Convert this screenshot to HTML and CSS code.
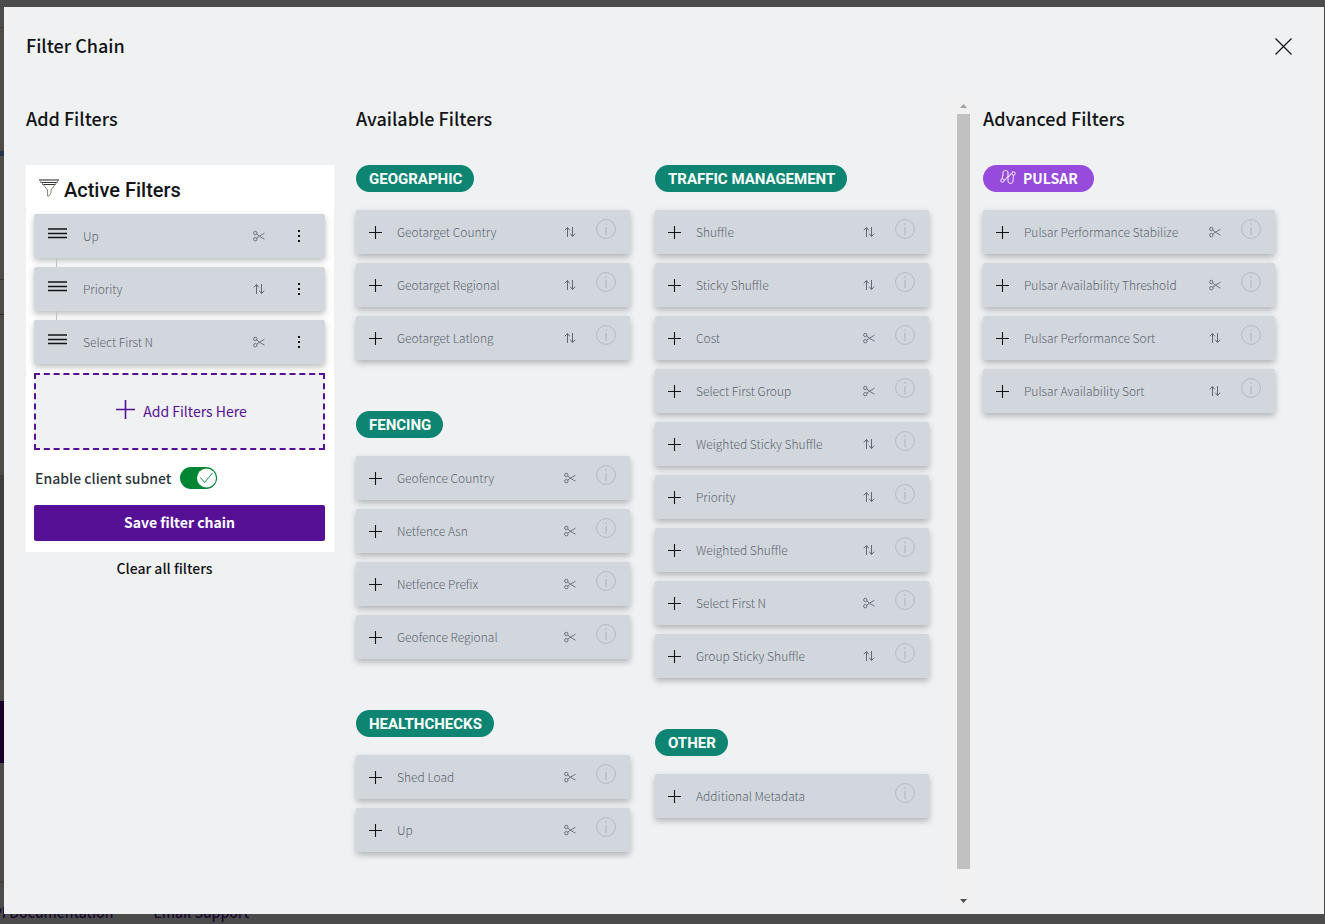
FILE: index.html
```html
<!DOCTYPE html>
<html lang="en">
<head>
<meta charset="utf-8">
<title>Filter Chain</title>
<link rel="stylesheet" href="styles.css">
</head>
<body>
<svg class="sprite" aria-hidden="true">
  <symbol id="plus" viewBox="0 0 13 13"><path d="M6.500 0v13M0 6.500h13" fill="none" stroke="currentColor" stroke-width="1.100"/></symbol>
  <symbol id="sort" viewBox="0 0 12 12"><path d="M3.500 11V1.600M.8 4.300l2.700-2.800 2.200 2.800M8.500 1v9.400M6.300 7.700l2.200 2.800 2.700-2.800" fill="none" stroke="currentColor" stroke-width="1"/></symbol>
  <symbol id="cut" viewBox="0 0 12 12"><g fill="none" stroke="currentColor" stroke-width=".9"><circle cx="2.300" cy="3" r="1.700"/><circle cx="2.300" cy="9.200" r="1.700"/><path d="M3.800 4 6.400 6.200 11.500 9.200M3.800 8.200 6.400 6.200 11.500 3.200"/></g></symbol>
  <symbol id="info" viewBox="0 0 20 20"><g fill="none" stroke="currentColor"><circle cx="10" cy="10" r="9.400"/><path d="M10 8v8M10 4.300v1.700" stroke-width="1.300"/></g></symbol>
  <symbol id="bars" viewBox="0 0 19 11"><path d="M0 1h19M0 5.500h19M0 9.500h19" fill="none" stroke="currentColor" stroke-width="1.300"/></symbol>
  <symbol id="dots" viewBox="0 0 4 14"><path d="M1 1h2v2H1zM1 6h2v2H1zM1 11h2v2H1z" fill="currentColor"/></symbol>
</svg>

<div class="page" aria-hidden="true">
  <div class="page-edge"></div>
  <div class="page-footer"><span>API Documentation</span><span>Email Support</span></div>
</div>

<main class="modal" role="dialog" aria-labelledby="title">
  <header class="modal-head">
    <h1 id="title">Filter Chain</h1>
    <button class="close" aria-label="Close"><svg viewBox="0 0 17 17"><path d="M.5.500l16 16M16.500.500l-16 16" fill="none" stroke="currentColor" stroke-width="1.200"/></svg></button>
  </header>

  <div class="columns">
    <section class="add-filters">
      <h2>Add Filters</h2>
      <div class="panel">
        <h3 class="panel-title"><svg viewBox="0 0 20 18"><g fill="none" stroke="currentColor"><path d="M0 1h20" stroke-width="1.100"/><path d="M1.500 3.500h17M3.500 5.500h13"/><path d="M1 1.500 8.500 11v6h1.500l2-3v-3L19 1.500" stroke="#8b7468" stroke-width=".9"/></g></svg>Active Filters</h3>
        <ul class="cards active">
          <li class="card"><button class="drag" aria-label="Move Up"><svg><use href="#bars"/></svg></button><span class="name">Up</span><svg class="kind"><use href="#cut"/></svg><button class="more" aria-label="Up options"><svg><use href="#dots"/></svg></button></li>
          <li class="card"><button class="drag" aria-label="Move Priority"><svg><use href="#bars"/></svg></button><span class="name">Priority</span><svg class="kind"><use href="#sort"/></svg><button class="more" aria-label="Priority options"><svg><use href="#dots"/></svg></button></li>
          <li class="card"><button class="drag" aria-label="Move Select First N"><svg><use href="#bars"/></svg></button><span class="name">Select First N</span><svg class="kind"><use href="#cut"/></svg><button class="more" aria-label="Select First N options"><svg><use href="#dots"/></svg></button></li>
        </ul>
        <div class="drop"><svg><use href="#plus"/></svg><span>Add Filters Here</span></div>
        <div class="subnet"><label for="subnet">Enable client subnet</label>
          <span class="switch"><input id="subnet" type="checkbox" role="switch" checked><svg viewBox="0 0 37 22"><circle cx="26.500" cy="11" r="9.500" fill="#fff"/><path d="M20.500 10.500l4 5L32.500 6" fill="none" stroke="#008533" stroke-width=".9"/></svg></span>
        </div>
        <button class="save">Save filter chain</button>
      </div>
      <button class="clear">Clear all filters</button>
    </section>

    <section class="available">
      <div class="groups">
        <div class="group-col">
          <h2>Available Filters</h2>
          <div class="group">
            <h3 class="badge">GEOGRAPHIC</h3>
            <ul class="cards">
              <li class="card"><button class="add" aria-label="Add Geotarget Country"><svg><use href="#plus"/></svg></button><span class="name">Geotarget Country</span><svg class="kind"><use href="#sort"/></svg><button class="info" aria-label="About Geotarget Country"><svg><use href="#info"/></svg></button></li>
              <li class="card"><button class="add" aria-label="Add Geotarget Regional"><svg><use href="#plus"/></svg></button><span class="name">Geotarget Regional</span><svg class="kind"><use href="#sort"/></svg><button class="info" aria-label="About Geotarget Regional"><svg><use href="#info"/></svg></button></li>
              <li class="card"><button class="add" aria-label="Add Geotarget Latlong"><svg><use href="#plus"/></svg></button><span class="name">Geotarget Latlong</span><svg class="kind"><use href="#sort"/></svg><button class="info" aria-label="About Geotarget Latlong"><svg><use href="#info"/></svg></button></li>
            </ul>
          </div>
          <div class="group">
            <h3 class="badge">FENCING</h3>
            <ul class="cards">
              <li class="card"><button class="add" aria-label="Add Geofence Country"><svg><use href="#plus"/></svg></button><span class="name">Geofence Country</span><svg class="kind"><use href="#cut"/></svg><button class="info" aria-label="About Geofence Country"><svg><use href="#info"/></svg></button></li>
              <li class="card"><button class="add" aria-label="Add Netfence Asn"><svg><use href="#plus"/></svg></button><span class="name">Netfence Asn</span><svg class="kind"><use href="#cut"/></svg><button class="info" aria-label="About Netfence Asn"><svg><use href="#info"/></svg></button></li>
              <li class="card"><button class="add" aria-label="Add Netfence Prefix"><svg><use href="#plus"/></svg></button><span class="name">Netfence Prefix</span><svg class="kind"><use href="#cut"/></svg><button class="info" aria-label="About Netfence Prefix"><svg><use href="#info"/></svg></button></li>
              <li class="card"><button class="add" aria-label="Add Geofence Regional"><svg><use href="#plus"/></svg></button><span class="name">Geofence Regional</span><svg class="kind"><use href="#cut"/></svg><button class="info" aria-label="About Geofence Regional"><svg><use href="#info"/></svg></button></li>
            </ul>
          </div>
          <div class="group">
            <h3 class="badge">HEALTHCHECKS</h3>
            <ul class="cards">
              <li class="card"><button class="add" aria-label="Add Shed Load"><svg><use href="#plus"/></svg></button><span class="name">Shed Load</span><svg class="kind"><use href="#cut"/></svg><button class="info" aria-label="About Shed Load"><svg><use href="#info"/></svg></button></li>
              <li class="card"><button class="add" aria-label="Add Up"><svg><use href="#plus"/></svg></button><span class="name">Up</span><svg class="kind"><use href="#cut"/></svg><button class="info" aria-label="About Up"><svg><use href="#info"/></svg></button></li>
            </ul>
          </div>
        </div>
        <div class="group-col untitled">
          <div class="group">
            <h3 class="badge">TRAFFIC MANAGEMENT</h3>
            <ul class="cards">
              <li class="card"><button class="add" aria-label="Add Shuffle"><svg><use href="#plus"/></svg></button><span class="name">Shuffle</span><svg class="kind"><use href="#sort"/></svg><button class="info" aria-label="About Shuffle"><svg><use href="#info"/></svg></button></li>
              <li class="card"><button class="add" aria-label="Add Sticky Shuffle"><svg><use href="#plus"/></svg></button><span class="name">Sticky Shuffle</span><svg class="kind"><use href="#sort"/></svg><button class="info" aria-label="About Sticky Shuffle"><svg><use href="#info"/></svg></button></li>
              <li class="card"><button class="add" aria-label="Add Cost"><svg><use href="#plus"/></svg></button><span class="name">Cost</span><svg class="kind"><use href="#cut"/></svg><button class="info" aria-label="About Cost"><svg><use href="#info"/></svg></button></li>
              <li class="card"><button class="add" aria-label="Add Select First Group"><svg><use href="#plus"/></svg></button><span class="name">Select First Group</span><svg class="kind"><use href="#cut"/></svg><button class="info" aria-label="About Select First Group"><svg><use href="#info"/></svg></button></li>
              <li class="card"><button class="add" aria-label="Add Weighted Sticky Shuffle"><svg><use href="#plus"/></svg></button><span class="name">Weighted Sticky Shuffle</span><svg class="kind"><use href="#sort"/></svg><button class="info" aria-label="About Weighted Sticky Shuffle"><svg><use href="#info"/></svg></button></li>
              <li class="card"><button class="add" aria-label="Add Priority"><svg><use href="#plus"/></svg></button><span class="name">Priority</span><svg class="kind"><use href="#sort"/></svg><button class="info" aria-label="About Priority"><svg><use href="#info"/></svg></button></li>
              <li class="card"><button class="add" aria-label="Add Weighted Shuffle"><svg><use href="#plus"/></svg></button><span class="name">Weighted Shuffle</span><svg class="kind"><use href="#sort"/></svg><button class="info" aria-label="About Weighted Shuffle"><svg><use href="#info"/></svg></button></li>
              <li class="card"><button class="add" aria-label="Add Select First N"><svg><use href="#plus"/></svg></button><span class="name">Select First N</span><svg class="kind"><use href="#cut"/></svg><button class="info" aria-label="About Select First N"><svg><use href="#info"/></svg></button></li>
              <li class="card"><button class="add" aria-label="Add Group Sticky Shuffle"><svg><use href="#plus"/></svg></button><span class="name">Group Sticky Shuffle</span><svg class="kind"><use href="#sort"/></svg><button class="info" aria-label="About Group Sticky Shuffle"><svg><use href="#info"/></svg></button></li>
            </ul>
          </div>
          <div class="group">
            <h3 class="badge">OTHER</h3>
            <ul class="cards">
              <li class="card"><button class="add" aria-label="Add Additional Metadata"><svg><use href="#plus"/></svg></button><span class="name">Additional Metadata</span><button class="info" aria-label="About Additional Metadata"><svg><use href="#info"/></svg></button></li>
            </ul>
          </div>
        </div>
      </div>
      <div class="scrollbar">
        <button aria-label="Scroll up"><svg viewBox="0 0 7 4"><path d="M0 4 3.500 0 7 4z" fill="#a3a3a3"/></svg></button>
        <div class="track"><div class="thumb"></div></div>
        <button aria-label="Scroll down"><svg viewBox="0 0 7 4"><path d="M0 0h7L3.500 4z" fill="#505050"/></svg></button>
      </div>
    </section>

    <section class="advanced">
      <h2>Advanced Filters</h2>
      <div class="group">
        <h3 class="badge pulsar"><svg viewBox="0 0 16 14"><g fill="none" stroke="currentColor" stroke-width="1"><circle cx="2.400" cy="10.500" r="1.700"/><circle cx="13.500" cy="3.500" r="1.700"/><path d="M2.400 8.800V7.300C2.400 6.300 3 6 3 5V3C3 1.300 3.700.6 5.500.6S8 1.300 8 3v7.500c0 1.900.8 2.900 2.500 2.900s2.600-1 2.600-2.900V8.500c0-1 .5-1.300.5-3.300M4.100 10.500C6.500 10.500 5.500 7 8 6.800c2.500-.1 1.500-3.300 3.800-3.300"/></g></svg>PULSAR</h3>
        <ul class="cards">
          <li class="card"><button class="add" aria-label="Add Pulsar Performance Stabilize"><svg><use href="#plus"/></svg></button><span class="name">Pulsar Performance Stabilize</span><svg class="kind"><use href="#cut"/></svg><button class="info" aria-label="About Pulsar Performance Stabilize"><svg><use href="#info"/></svg></button></li>
          <li class="card"><button class="add" aria-label="Add Pulsar Availability Threshold"><svg><use href="#plus"/></svg></button><span class="name">Pulsar Availability Threshold</span><svg class="kind"><use href="#cut"/></svg><button class="info" aria-label="About Pulsar Availability Threshold"><svg><use href="#info"/></svg></button></li>
          <li class="card"><button class="add" aria-label="Add Pulsar Performance Sort"><svg><use href="#plus"/></svg></button><span class="name">Pulsar Performance Sort</span><svg class="kind"><use href="#sort"/></svg><button class="info" aria-label="About Pulsar Performance Sort"><svg><use href="#info"/></svg></button></li>
          <li class="card"><button class="add" aria-label="Add Pulsar Availability Sort"><svg><use href="#plus"/></svg></button><span class="name">Pulsar Availability Sort</span><svg class="kind"><use href="#sort"/></svg><button class="info" aria-label="About Pulsar Availability Sort"><svg><use href="#info"/></svg></button></li>
        </ul>
      </div>
    </section>
  </div>
</main>
</body>
</html>
```
FILE: styles.css
```css
* { box-sizing: border-box; }
body {
  margin: 0;
  display: flex;
  min-height: 100vh;
  padding: 7px 1px 10px 4px;
  background: #4c4c4c;
  color: #121417;
  font-family: "Noto Sans CJK SC", "Noto Sans", sans-serif;
  font-size: 14px;
  line-height: 20px;
}
h1, h2, h3, ul { margin: 0; padding: 0; }
ul { list-style: none; }
button { margin: 0; padding: 0; border: 0; background: none; color: inherit; font: inherit; cursor: pointer; }
svg { display: block; flex: none; }
.sprite { position: absolute; width: 0; height: 0; }

/* Dimmed page under the dialog */
.page { position: absolute; inset: 0; overflow: hidden; }
.page-edge {
  width: 4px;
  height: 100%;
  background: linear-gradient(#4c4c4c 27px, #3f3f3f 27px 28px, #4f4b47 28px 151px, #26364a 151px 156px, #4f4b47 156px 279px, #3a3a3a 279px 280px, #4f4b47 280px 314px, #2b2b2b 314px 315px, #4f4b47 315px 475px, #3f3f3f 475px 680px, #4c4b49 680px 701px, #170029 701px 763px, #4c4b48 763px 882px, #3d3d3d 882px 883px, #4c4c4c 883px);
}
.page-footer {
  position: absolute;
  left: -16px;
  bottom: 2px;
  display: flex;
  gap: 40px;
  color: #180a2c;
  font-weight: 500;
}

.modal { position: relative; flex: 1; min-width: 0; display: flex; flex-direction: column; background: #f0f1f3; }
.modal-head { display: flex; justify-content: space-between; align-items: flex-start; padding: 26px 32px 40px 22px; }
h1, h2 { font-size: 18px; line-height: 24px; font-weight: 500; }
.close svg { width: 17px; height: 17px; margin-top: 5px; }

.columns {
  flex: 1;
  display: grid;
  grid-template-columns: minmax(0, 318fr) minmax(0, 615fr) minmax(0, 292fr);
  column-gap: 12px;
  padding: 0 49px 5px 22px;
}
h2 { padding-top: 9px; margin-bottom: 35px; }

.add-filters { padding-right: 10px; display: flex; flex-direction: column; }
.panel { padding: 12px 9px 11px 8px; background: #fff; }
.panel-title {
  display: flex;
  align-items: center;
  gap: 5px;
  padding: 0 0 11px 5px;
  font-family: "Roboto", sans-serif;
  font-size: 20px;
  line-height: 26px;
  font-weight: 500;
}
.panel-title svg { width: 20px; height: 18px; margin-bottom: 4px; color: #333; }

.cards { display: grid; gap: 9px; }
.card {
  position: relative;
  display: flex;
  align-items: center;
  height: 44px;
  padding: 0 14px 0 13px;
  border-radius: 2px;
  background: #d2d7de;
  box-shadow: 0 3px 6px rgba(0, 0, 0, .26);
}
.name { flex: 1; min-width: 0; padding-bottom: 1px; white-space: nowrap; color: #5c6470; font-size: 12px; font-weight: 300; }
.kind { width: 12px; height: 12px; color: #5f6873; }
.add { margin-right: 15px; }
.add svg { width: 13px; height: 13px; }
.info { margin: 0 0 6px 20px; color: #b4bac4; }
.info svg { width: 20px; height: 20px; }

.active .card { padding: 0 24px 0 14px; }
.active .card + .card::before { content: ""; position: absolute; left: 22px; bottom: 100%; width: 1px; height: 9px; background: #b9c0c9; }
.drag { margin: 0 16px 5px 0; }
.drag svg { width: 19px; height: 11px; }
.more { margin-left: 32px; }
.more svg { width: 4px; height: 14px; }

.drop {
  display: flex;
  align-items: center;
  justify-content: center;
  gap: 8px;
  height: 77px;
  margin: 9px 0 17px;
  padding: 0 0 2px 4px;
  border: 2px dashed #551096;
  background: #f0f1f3;
  color: #551096;
  font-weight: 400;
}
.drop svg { width: 19px; height: 19px; margin-bottom: 2px; }
.subnet { display: flex; align-items: center; gap: 9px; padding-left: 1px; margin-bottom: 16px; height: 22px; color: #2d343c; font-weight: 500; }
.switch { position: relative; width: 37px; height: 22px; }
.switch input { appearance: none; display: block; width: 100%; height: 100%; margin: 0; border-radius: 11px; background: #008533; }
.switch svg { position: absolute; inset: 0; pointer-events: none; }
.save { display: block; width: 100%; height: 36px; padding-bottom: 2px; border-radius: 2px; background: #551096; color: #fff; font-weight: 700; }
.clear { align-self: center; margin: 6px 31px 0 0; font-weight: 500; }

.available { display: flex; gap: 26px; }
.groups { flex: 1; min-width: 0; display: grid; grid-template-columns: repeat(2, minmax(0, 1fr)); gap: 25px; }
.untitled { padding-top: 68px; }
.group + .group { margin-top: 51px; }
.badge {
  display: flex;
  align-items: center;
  width: fit-content;
  height: 27px;
  margin-bottom: 18px;
  padding: 0 12px 0 13px;
  border-radius: 14px;
  background: #0e8573;
  color: #fff;
  font-family: "Roboto", sans-serif;
  font-size: 15px;
  line-height: 20px;
  font-weight: 700;
}
.pulsar { gap: 7px; padding: 0 16px 2px 17px; background: #964bdc; font-family: "Noto Sans CJK SC", sans-serif; font-size: 14px; }
.pulsar svg { width: 16px; height: 14px; margin-bottom: 2px; }

.scrollbar { display: flex; flex-direction: column; width: 16px; background: #f1f1f1; }
.scrollbar button { display: flex; justify-content: center; align-items: center; height: 17px; }
.scrollbar svg { width: 7px; height: 4px; }
.track { flex: 1; padding: 0 1px 0 2px; }
.thumb { height: 97%; background: #c1c1c1; }
```
